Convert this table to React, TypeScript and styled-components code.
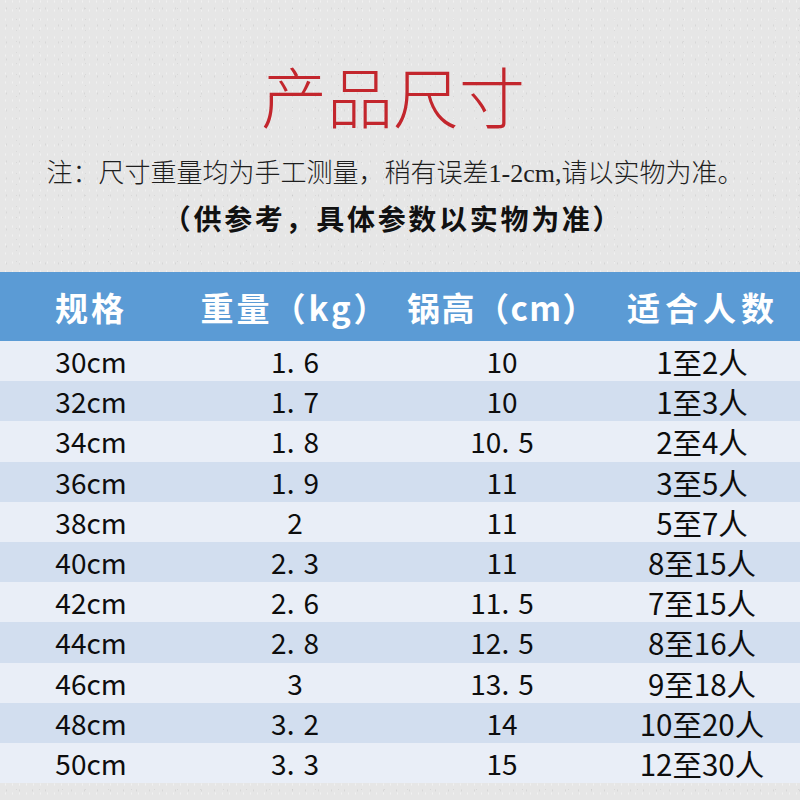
import React from 'react';
import styled, { createGlobalStyle } from 'styled-components';

const Global = createGlobalStyle`
  html, body {
    margin: 0;
    padding: 0;
    background: #e5e5e5;
  }
  * {
    box-sizing: border-box;
  }
`;

const Page = styled.div`
  width: 800px;
  height: 800px;
  overflow: hidden;
  background-color: #e6e6e6;
  background-image:
    radial-gradient(rgba(110, 110, 110, 0.12) 0.5px, transparent 1px),
    radial-gradient(rgba(90, 90, 90, 0.1) 0.5px, transparent 1px),
    radial-gradient(rgba(255, 255, 255, 0.45) 0.6px, transparent 1px);
  background-size: 13px 17px, 23px 11px, 7px 9px;
  background-position: 0 0, 5px 3px, 2px 6px;
  font-family: 'Noto Sans CJK SC', 'Noto Sans', sans-serif;
`;

const Intro = styled.header`
  height: 272px;
  padding: 52px 14px 0 0;
  display: flex;
  flex-direction: column;
  align-items: center;
`;

const Title = styled.h1`
  margin: 0;
  height: 84px;
  font-size: 66px;
  line-height: 84px;
  font-weight: 300;
  color: #c3262d;
`;

const Note = styled.p`
  margin: 23px 0 0;
  font-family: 'Liberation Serif', 'Noto Sans CJK SC', serif;
  font-size: 26px;
  line-height: 30px;
  color: #1e1e1e;
  font-weight: 300;
  padding-left: 4px;
`;

const Sub = styled.p`
  margin: 12px 0 0;
  font-size: 28px;
  line-height: 34px;
  font-weight: 700;
  color: #111;
  letter-spacing: 2.7px;
`;

const Table = styled.div`
  display: grid;
  grid-template-columns: 182px 226px 188px 204px;
`;

const HeadRow = styled.div`
  display: contents;
`;

const HeadCell = styled.div<{ $shift?: number; $spacing?: number }>`
  height: 69px;
  background: #5b9bd5;
  color: #fff;
  font-size: 33px;
  font-weight: 700;
  letter-spacing: ${(p) => p.$spacing ?? 3}px;
  display: flex;
  align-items: center;
  justify-content: center;
  padding-left: ${(p) => p.$shift ?? 0}px;
  white-space: nowrap;
`;

const Cell = styled.div<{ $alt: boolean; $shift?: number }>`
  height: 40.2px;
  background: ${(p) => (p.$alt ? '#d2deef' : '#e9eef7')};
  color: #0d0d0d;
  font-size: 28px;
  line-height: 40px;
  text-align: center;
  padding-left: ${(p) => p.$shift ?? 0}px;
  white-space: nowrap;
`;

const People = styled.span`
  font-size: 29.5px;
`;

const Dot = styled.span`
  margin-right: 0.32em;
`;

const headers: [string, number, number][] = [
  ['规格', 0, 3],
  ['重量（kg）', 0, 3],
  ['锅高（cm）', 0, 1.5],
  ['适合人数', 10, 5],
];

const rows = [
  ['30cm', '1.6', '10', '1至2人'],
  ['32cm', '1.7', '10', '1至3人'],
  ['34cm', '1.8', '10.5', '2至4人'],
  ['36cm', '1.9', '11', '3至5人'],
  ['38cm', '2', '11', '5至7人'],
  ['40cm', '2.3', '11', '8至15人'],
  ['42cm', '2.6', '11.5', '7至15人'],
  ['44cm', '2.8', '12.5', '8至16人'],
  ['46cm', '3', '13.5', '9至18人'],
  ['48cm', '3.2', '14', '10至20人'],
  ['50cm', '3.3', '15', '12至30人'],
];

function Num({ value }: { value: string }) {
  const [a, b] = value.split('.');
  if (b === undefined) return <>{value}</>;
  return (
    <>
      {a}
      <Dot>.</Dot>
      {b}
    </>
  );
}

export default function App() {
  return (
    <Page>
      <Global />
      <Intro>
        <Title>产品尺寸</Title>
        <Note>注：尺寸重量均为手工测量，稍有误差1-2cm,请以实物为准。</Note>
        <Sub>（供参考，具体参数以实物为准）</Sub>
      </Intro>
      <Table>
        <HeadRow>
          {headers.map(([h, s, ls]) => (
            <HeadCell key={h} $shift={s} $spacing={ls}>
              {h}
            </HeadCell>
          ))}
        </HeadRow>
        {rows.map((r, i) =>
          r.map((v, j) => (
            <Cell key={`${i}-${j}`} $alt={i % 2 === 1} $shift={j === 3 ? 8 : 0}>
              {j === 1 || j === 2 ? <Num value={v} /> : j === 3 ? <People>{v}</People> : v}
            </Cell>
          ))
        )}
      </Table>
    </Page>
  );
}
